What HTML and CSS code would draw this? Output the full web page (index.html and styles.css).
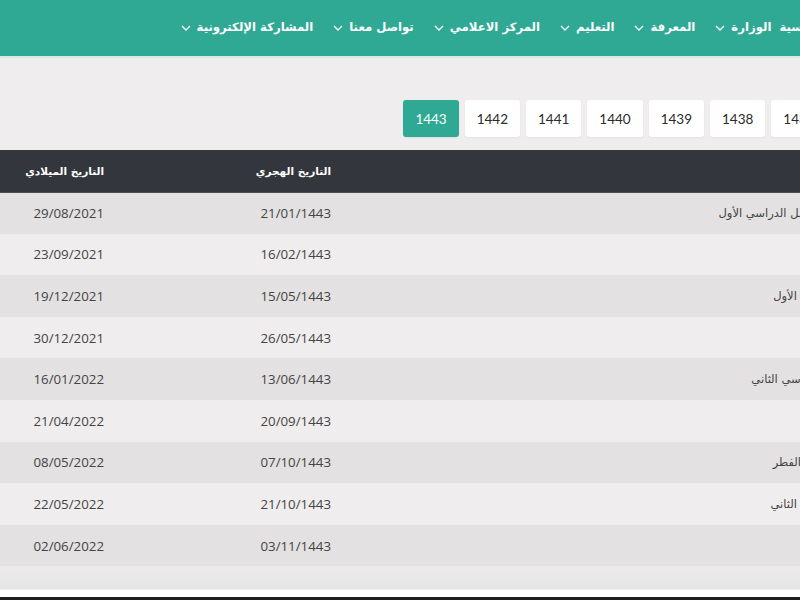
FILE: index.html
```html
<!DOCTYPE html>
<html lang="ar" dir="ltr">
<head>
<meta charset="utf-8">
<title>التقويم الدراسي</title>
<link rel="stylesheet" href="styles.css">
</head>
<body>
<div class="viewport">
  <div class="site">
    <header class="topbar">
      <nav class="nav">
        <a class="nav-item home" href="#">الرئيسية</a>
        <a class="nav-item" href="#">الوزارة<svg class="chev" viewBox="0 0 10 6"><polyline points="1,1 5,5 9,1"/></svg></a>
        <a class="nav-item" href="#">المعرفة<svg class="chev" viewBox="0 0 10 6"><polyline points="1,1 5,5 9,1"/></svg></a>
        <a class="nav-item" href="#">التعليم<svg class="chev" viewBox="0 0 10 6"><polyline points="1,1 5,5 9,1"/></svg></a>
        <a class="nav-item" href="#">المركز الاعلامي<svg class="chev" viewBox="0 0 10 6"><polyline points="1,1 5,5 9,1"/></svg></a>
        <a class="nav-item" href="#">تواصل معنا<svg class="chev" viewBox="0 0 10 6"><polyline points="1,1 5,5 9,1"/></svg></a>
        <a class="nav-item" href="#">المشاركة الإلكترونية<svg class="chev" viewBox="0 0 10 6"><polyline points="1,1 5,5 9,1"/></svg></a>
      </nav>
    </header>

    <main class="content">
      <div class="years">
        <button class="year">1436</button>
        <button class="year">1437</button>
        <button class="year">1438</button>
        <button class="year">1439</button>
        <button class="year">1440</button>
        <button class="year">1441</button>
        <button class="year">1442</button>
        <button class="year active">1443</button>
      </div>

      <table class="cal">
        <thead>
          <tr>
            <th class="c-event">الحدث</th>
            <th class="c-hijri">التاريخ الهجري</th>
            <th class="c-greg">التاريخ الميلادي</th>
          </tr>
        </thead>
        <tbody>
          <tr><td class="c-event">موعد الفصل الدراسي الأول</td><td class="c-hijri">21/01/1443</td><td class="c-greg">29/08/2021</td></tr>
          <tr><td class="c-event">إجازة</td><td class="c-hijri">16/02/1443</td><td class="c-greg">23/09/2021</td></tr>
          <tr><td class="c-event">بدء الفصل الأول</td><td class="c-hijri">15/05/1443</td><td class="c-greg">19/12/2021</td></tr>
          <tr><td class="c-event">إجازة</td><td class="c-hijri">26/05/1443</td><td class="c-greg">30/12/2021</td></tr>
          <tr><td class="c-event">فصل الدراسي الثاني</td><td class="c-hijri">13/06/1443</td><td class="c-greg">16/01/2022</td></tr>
          <tr><td class="c-event">إجازة</td><td class="c-hijri">20/09/1443</td><td class="c-greg">21/04/2022</td></tr>
          <tr><td class="c-event">إجازة عيد الفطر</td><td class="c-hijri">07/10/1443</td><td class="c-greg">08/05/2022</td></tr>
          <tr><td class="c-event">بدء الفصل الثاني</td><td class="c-hijri">21/10/1443</td><td class="c-greg">22/05/2022</td></tr>
          <tr><td class="c-event">نهاية</td><td class="c-hijri">03/11/1443</td><td class="c-greg">02/06/2022</td></tr>
        </tbody>
      </table>
      <div class="table-foot"></div>
    </main>
  </div>
</div>
<div class="bottom-edge"></div>
</body>
</html>
```

FILE: styles.css
```css
html, body {
  margin: 0;
  padding: 0;
  background: #efeded;
}
body {
  width: 800px;
  height: 600px;
  overflow: hidden;
  font-family: "Open Sans", "DejaVu Sans", sans-serif;
  display: flex;
  flex-direction: column;
}
.viewport {
  flex: 1;
  overflow: hidden;
}
.site {
  width: 896px;
  direction: rtl;
}

/* top navigation */
.topbar {
  height: 56px;
  background: #2fa994;
  border-bottom: 2px solid #d2ece6;
  display: flex;
  align-items: center;
}
.nav {
  display: flex;
  align-items: center;
  gap: 20px;
  padding-right: 68px;
}
.nav-item {
  color: #ffffff;
  text-decoration: none;
  font-family: "DejaVu Sans", sans-serif;
  font-weight: bold;
  font-size: 11.7px;
  display: flex;
  align-items: center;
  gap: 6px;
  white-space: nowrap;
  line-height: 1;
}
.nav-item.home {
  margin-left: -12px;
}
.chev {
  width: 10px;
  height: 6px;
  fill: none;
  stroke: #ffffff;
  stroke-width: 1.3;
}

/* content */
.content {
  padding-top: 42px;
}
.years {
  display: flex;
  gap: 6px;
  padding-right: 8px;
  margin-bottom: 13px;
}
.year {
  height: 37px;
  padding: 0 12px;
  border: none;
  border-radius: 3px;
  background: #ffffff;
  color: #2b2b2b;
  font-family: "Lato", "Open Sans", sans-serif;
  font-size: 13.5px;
  box-shadow: 0 1px 2px rgba(0,0,0,0.06);
  direction: ltr;
}
.year.active {
  background: #2fa994;
  color: #ffffff;
}

.cal {
  width: 100%;
  border-collapse: collapse;
  table-layout: fixed;
}
.cal th {
  height: 42px;
  background: #33363d;
  color: #ffffff;
  font-family: "DejaVu Sans", sans-serif;
  font-weight: bold;
  font-size: 10.5px;
  text-align: right;
  padding: 0 16px;
  border-bottom: 1px solid #4a4d53;
  box-sizing: border-box;
  white-space: nowrap;
}
.cal td {
  height: 41.6px;
  padding: 0 16px;
  text-align: right;
  color: #444444;
  font-size: 13.3px;
  box-sizing: border-box;
  white-space: nowrap;
}
.cal tbody tr:nth-child(odd) td {
  background: #e3e1e1;
}
.cal tbody tr:nth-child(even) td {
  background: #efeded;
}
.cal .c-event {
  font-family: "DejaVu Sans", sans-serif;
  font-size: 11.5px;
  padding-right: 46px;
}
.cal .c-hijri {
  width: 227px;
}
.cal .c-greg {
  width: 120px;
}
.table-foot {
  height: 23px;
  background: linear-gradient(#ecebeb, #e6e5e5);
}
.bottom-edge {
  height: 7px;
  background: #ffffff;
  border-bottom: 3px solid #1e1e1e;
  flex: none;
}
```
